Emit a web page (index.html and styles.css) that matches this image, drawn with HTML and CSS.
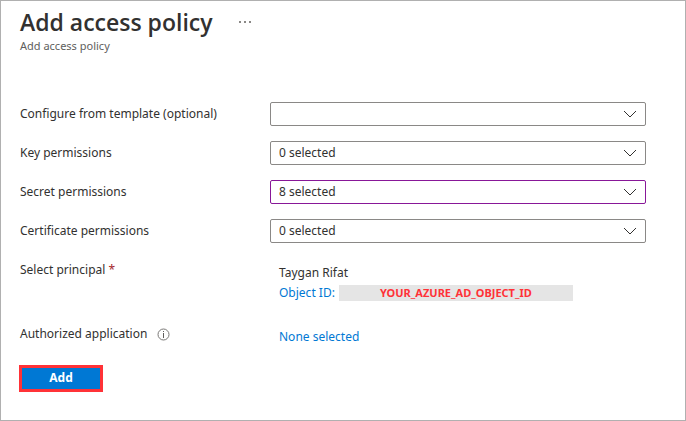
FILE: index.html
```html
<!DOCTYPE html>
<html lang="en">
<head>
<meta charset="utf-8">
<title>Add access policy</title>
<link rel="stylesheet" href="styles.css">
</head>
<body>
<main class="blade">
  <header class="header">
    <div class="title-row">
      <h1 class="title">Add access policy</h1>
      <button class="more" type="button" aria-label="More">
        <svg width="12" height="4" viewBox="0 0 12 4"><path d="M0 1h2v2H0zM5 1h2v2H5zM10 1h2v2h-2z" fill="#8a8886"/></svg>
      </button>
    </div>
    <p class="subtitle">Add access policy</p>
  </header>
  <form class="form">
    <div class="row">
      <label for="template">Configure from template (optional)</label>
      <div class="dropdown">
        <select id="template"><option></option></select>
        <svg class="chevron" viewBox="0 0 14 8"><path d="M1 1l6 6 6-6"/></svg>
      </div>
    </div>
    <div class="row">
      <label for="key">Key permissions</label>
      <div class="dropdown">
        <select id="key"><option>0 selected</option></select>
        <svg class="chevron" viewBox="0 0 14 8"><path d="M1 1l6 6 6-6"/></svg>
      </div>
    </div>
    <div class="row">
      <label for="secret">Secret permissions</label>
      <div class="dropdown">
        <select id="secret" class="edited"><option>8 selected</option></select>
        <svg class="chevron" viewBox="0 0 14 8"><path d="M1 1l6 6 6-6"/></svg>
      </div>
    </div>
    <div class="row">
      <label for="certificate">Certificate permissions</label>
      <div class="dropdown">
        <select id="certificate"><option>0 selected</option></select>
        <svg class="chevron" viewBox="0 0 14 8"><path d="M1 1l6 6 6-6"/></svg>
      </div>
    </div>
    <div class="row principal">
      <span>Select principal <span class="required">*</span></span>
      <div class="value">
        <div>Taygan Rifat</div>
        <div class="object"><a href="#">Object ID:</a><span class="object-id">YOUR_AZURE_AD_OBJECT_ID</span></div>
      </div>
    </div>
    <div class="row application">
      <span class="with-info">Authorized application
        <svg class="info" width="13" height="13" viewBox="0 0 13 13"><circle cx="6.5" cy="6.5" r="5.5" fill="none" stroke="#797775"/><path d="M6 3h1v1H6zM6 5h1v5H6z" fill="#605e5c"/></svg>
      </span>
      <div class="value"><a href="#">None selected</a></div>
    </div>
    <button class="add" type="submit">Add</button>
  </form>
</main>
</body>
</html>
```
FILE: styles.css
```css
* { box-sizing: border-box; }

body {
  margin: 0;
  background: #fff;
  color: #323130;
  font: 12px/20px "Noto Sans", "Open Sans", sans-serif;
}

.blade {
  min-height: 100vh;
  padding: 5px 39px 24px 19px;
  border: 1px solid #b0b0b0;
}

.title-row {
  display: flex;
  align-items: center;
  gap: 26px;
}

.title {
  margin: 0;
  font-family: "Open Sans", "Noto Sans", sans-serif;
  font-size: 23px;
  line-height: 32px;
  font-weight: 600;
}

.more {
  display: flex;
  padding: 0;
  border: 0;
  background: none;
}

.subtitle {
  margin: 0;
  color: #605e5c;
  font-size: 11px;
  line-height: 16px;
}

.form {
  display: flex;
  flex-direction: column;
  gap: 15px;
  margin-top: 48px;
}

.row {
  display: grid;
  grid-template-columns: 250px 1fr;
  align-items: center;
}

.dropdown { position: relative; }

select {
  display: block;
  width: 100%;
  height: 24px;
  padding: 0 32px 0 8px;
  border: 1px solid #8a8886;
  border-radius: 2px;
  appearance: none;
  background: #fff;
  color: inherit;
  font: inherit;
  line-height: 20px;
}

select.edited { border-color: #881798; }

.chevron {
  position: absolute;
  top: 8px;
  right: 9px;
  width: 14px;
  height: 8px;
  fill: none;
  stroke: #323130;
  pointer-events: none;
}

.value { padding-left: 9px; }

.principal {
  align-items: start;
  margin-top: 2px;
}

.principal .value { padding-top: 3px; }

.required { color: #a4262c; }

a {
  color: #0078d4;
  text-decoration: none;
}

.object {
  display: flex;
  align-items: center;
  gap: 4px;
}

.object-id {
  width: 234px;
  background: #e5e5e5;
  color: #ff3237;
  font-size: 11px;
  line-height: 16px;
  font-weight: 700;
  text-align: center;
}

.application {
  align-items: start;
  margin-top: 6px;
}

.application .value { padding-top: 3px; }

.with-info {
  display: flex;
  align-items: center;
  gap: 10px;
}

.add {
  width: 84px;
  height: 27px;
  margin: 3px 0 0 -1px;
  padding: 0 0 2px;
  border: 3px solid #ff3237;
  background: #0078d4;
  color: #fff;
  font: inherit;
  font-weight: 700;
}
```
